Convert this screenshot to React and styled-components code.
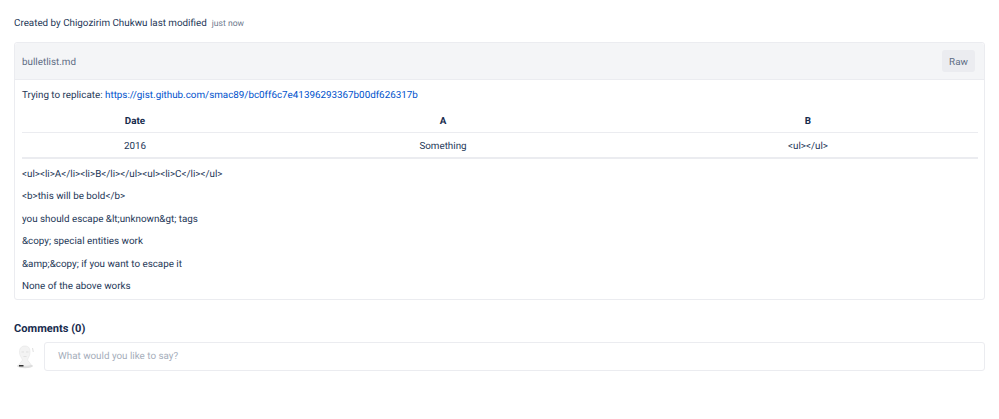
import React from "react";
import styled, { createGlobalStyle } from "styled-components";

const Global = createGlobalStyle`
  html, body { margin: 0; padding: 0; background: #fff; }
  body { font-family: Roboto, "Liberation Sans", sans-serif; font-size: 9.84px; color: #172b4d; -webkit-font-smoothing: antialiased; text-rendering: geometricPrecision; }
`;

const Page = styled.main`
  padding: 15px 14px 0;
  width: 999px;
  height: 419px;
  box-sizing: border-box;
  overflow: hidden;
`;

const Byline = styled.div`
  display: flex;
  align-items: baseline;
  gap: 5px;
  height: 15px;
  line-height: 17px;
  font-size: 9.84px;
  color: #253858;
`;

const Time = styled.span`
  font-size: 8.6px;
  color: #6b778c;
`;

const Card = styled.section`
  margin-top: 12px;
  border: 1px solid #ebecf0;
  border-radius: 3px;
`;

const CardHead = styled.header`
  height: 36px;
  display: flex;
  align-items: center;
  justify-content: space-between;
  padding: 0 9px 0 7px;
  background: #f4f5f7;
  border-bottom: 1px solid #ebecf0;
  border-radius: 3px 3px 0 0;
`;

const FileName = styled.span`
  padding-top: 2px;
  font-size: 9.84px;
  color: #5e6c84;
`;

const RawButton = styled.button`
  width: 33px;
  height: 22px;
  padding: 1px 0 0;
  border: 0;
  border-radius: 3px;
  background: #ebecf0;
  color: #5e6c84;
  font: inherit;
  font-size: 9.84px;
`;

const Body = styled.div`
  padding: 0 6px 2px 7px;
`;

const Para = styled.p`
  margin: 0;
  height: 22.4px;
  line-height: 24.4px;
  color: #253858;
  font-size: 9.84px;
`;

const Intro = styled(Para)`
  height: 29px;
  line-height: 31px;
`;

const Link = styled.a`
  color: #0052cc;
  text-decoration: none;
`;

const Table = styled.table`
  width: 100%;
  border-collapse: collapse;
  table-layout: fixed;
  border-bottom: 2px solid #ebecf0;
  margin-bottom: 4px;
`;

const Th = styled.th`
  height: 21px;
  width: ${(p) => p.$width}px;
  padding: 2px 0 0;
  font-size: 9.84px;
  font-weight: 700;
  color: #172b4d;
  border-bottom: 1px solid #ebecf0;
  text-align: center;
`;

const Td = styled.td`
  height: 22px;
  padding: 2px 0 0;
  font-size: 9.84px;
  color: #253858;
  text-align: center;
`;

const CommentsTitle = styled.h3`
  margin: 21px 0 0;
  height: 16px;
  line-height: 16px;
  font-size: 11.1px;
  font-weight: 700;
  color: #172b4d;
`;

const CommentRow = styled.div`
  margin-top: 5px;
  display: flex;
  align-items: center;
  gap: 8px;
`;

const Input = styled.div`
  flex: 1;
  height: 27px;
  line-height: 28px;
  padding-left: 13px;
  border: 1px solid #ebecf0;
  border-radius: 3px;
  font-size: 9.84px;
  color: #a5adba;
`;

const Avatar = () => (
  <svg width="22" height="24" viewBox="0 0 22 24" aria-hidden="true">
    <ellipse cx="11" cy="21" rx="8" ry="2.2" fill="#dedede" />
    <path d="M5.500 7c0-4.500 2.500-6 5.500-6s5 1.500 5 6c0 4-2 6-2.500 8l3.500 4.500c-2 2-10 2-12 0L8.500 15C8 13 5.500 11 5.500 7z" fill="#f3f3f3" stroke="#e6e6e6" strokeWidth=".6" />
    <path d="M7.500 7h2.500M12 7h2.500M9.500 11.500h3" stroke="#d8d8d8" strokeWidth=".7" />
    <rect x="5" y="20" width="4.500" height="1.500" fill="#333" />
    <path d="M18.500 3l.8 4" stroke="#e0e0e0" />
  </svg>
);

export default function App() {
  return (
    <Page>
      <Global />
      <Byline>
        <span>Created by Chigozirim Chukwu last modified</span>
        <Time>just now</Time>
      </Byline>
      <Card>
        <CardHead>
          <FileName>bulletlist.md</FileName>
          <RawButton>Raw</RawButton>
        </CardHead>
        <Body>
          <Intro>
            Trying to replicate: <Link href="#">https://gist.github.com/smac89/bc0ff6c7e41396293367b00df626317b</Link>
          </Intro>
          <Table>
            <thead>
              <tr><Th $width={226}>Date</Th><Th $width={390}>A</Th><Th $width={340}>B</Th></tr>
            </thead>
            <tbody>
              <tr><Td>2016</Td><Td>Something</Td><Td>{"<ul></ul>"}</Td></tr>
            </tbody>
          </Table>
          <Para>{"<ul><li>A</li><li>B</li></ul><ul><li>C</li></ul>"}</Para>
          <Para>{"<b>this will be bold</b>"}</Para>
          <Para>{"you should escape &lt;unknown&gt; tags"}</Para>
          <Para>{"&copy; special entities work"}</Para>
          <Para>{"&amp;&copy; if you want to escape it"}</Para>
          <Para>None of the above works</Para>
        </Body>
      </Card>
      <CommentsTitle>Comments (0)</CommentsTitle>
      <CommentRow>
        <Avatar />
        <Input>What would you like to say?</Input>
      </CommentRow>
    </Page>
  );
}
